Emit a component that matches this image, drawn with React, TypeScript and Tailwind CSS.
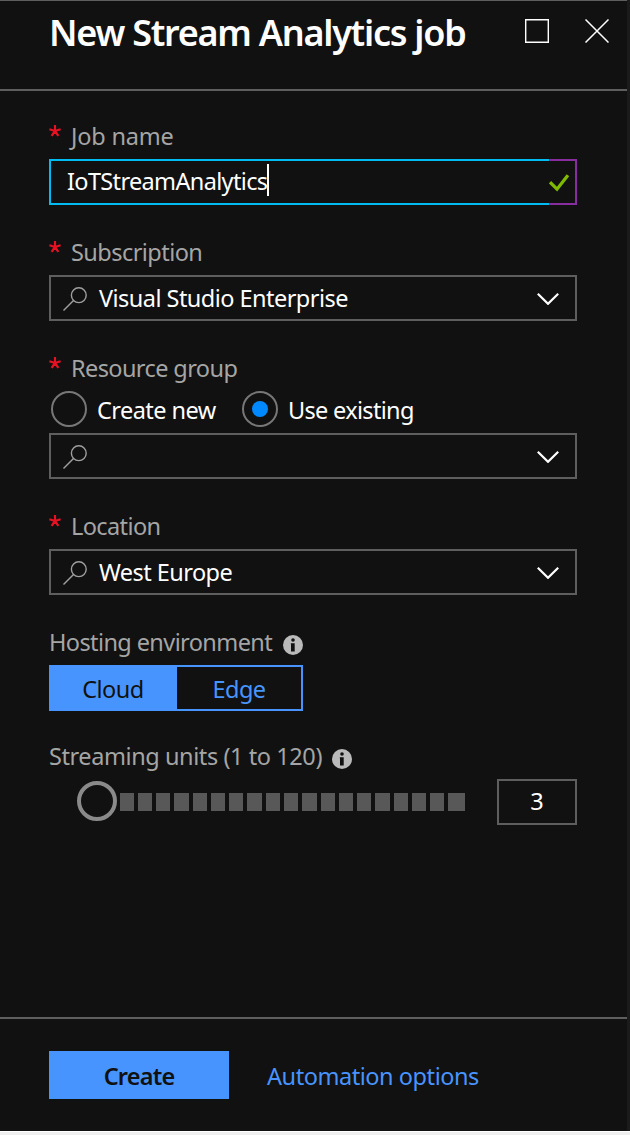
import type { ReactNode } from "react";

function Label({ children, required = false, tracking }: { children: ReactNode; required?: boolean; tracking: string }) {
  return (
    <div className="flex h-8 items-start text-[#a5a5a5]">
      {required && (
        <svg className="mt-[5px] mr-2.5 h-3 w-3 shrink-0" viewBox="0 0 12 12" fill="none" stroke="#e81123" strokeWidth="2.2">
          <path d="M6 0v6M6 6L.4 4.2M6 6l5.6-1.8M6 6l-3.4 4.8M6 6l3.4 4.8" />
        </svg>
      )}
      <span className={tracking}>{children}</span>
    </div>
  );
}

function SearchIcon() {
  return (
    <svg className="mt-0.5 h-6 w-6 shrink-0" viewBox="0 0 24 24" fill="none" stroke="#a0a0a0" strokeWidth="1.4">
      <circle cx="15.8" cy="8.2" r="7.4" />
      <path d="M10.5 13.5L.5 23.5" />
    </svg>
  );
}

function Chevron() {
  return (
    <svg className="mt-0.5 h-3 w-[22px] shrink-0" viewBox="0 0 22 12" fill="none" stroke="#fff" strokeWidth="2.2">
      <path d="M.8.8L11 10.8 21.2.8" />
    </svg>
  );
}

function InfoIcon({ className }: { className: string }) {
  return (
    <svg className={className} viewBox="0 0 20 20">
      <circle cx="10" cy="10" r="10" fill="#bababa" />
      <circle cx="10" cy="5" r="1.8" fill="#111" />
      <path d="M7.8 8.2h3.9v8.2H8V9.3h-.2z" fill="#111" />
    </svg>
  );
}

function Select({ children, tracking = "" }: { children?: ReactNode; tracking?: string }) {
  return (
    <div className="flex h-[46px] items-center border-2 border-[#5e5e5e] pr-4 pl-3 text-white">
      <SearchIcon />
      <span className={`ml-3 flex-1 ${tracking}`}>{children}</span>
      <Chevron />
    </div>
  );
}

function Radio({ children, checked = false, tracking }: { children: ReactNode; checked?: boolean; tracking: string }) {
  return (
    <div className="flex items-center text-white">
      <span className="flex size-9 items-center justify-center rounded-full border-2 border-[#777]">
        {checked && <span className="size-4 rounded-full bg-[#0089ff]" />}
      </span>
      <span className={`mt-0.5 ml-2.5 ${tracking}`}>{children}</span>
    </div>
  );
}

const segments = Array.from({ length: 19 }, (_, i) => i);

export default function App() {
  return (
    <div className="h-[1135px] w-[630px] overflow-hidden bg-[#efefef] font-['Noto_Sans','Open_Sans',sans-serif] text-[23.5px] leading-8 whitespace-nowrap">
      <div className="flex h-[1132px] flex-col border-b border-white bg-[#1b1b1b] pr-[3px]">
        <div className="flex h-full flex-col border-t border-[#5e5e5e] bg-[#111]">
          <header className="flex h-[90px] shrink-0 items-start border-b-2 border-[#5e5e5e] pr-[18px] pl-[49px] text-white">
            <h1 className="mt-2 flex-1 text-[36px] leading-[48px] font-semibold tracking-[-1.25px]">New Stream Analytics job</h1>
            <svg className="mt-[18px] mr-9 size-6" viewBox="0 0 24 24" fill="none" stroke="#fff" strokeWidth="1.4">
              <path d="M.7.7h22.6v22.6H.7z" />
            </svg>
            <svg className="mt-[18px] size-6" viewBox="0 0 24 24" fill="none" stroke="#fff" strokeWidth="1.5">
              <path d="M.5.5l23 23M23.5.5l-23 23" />
            </svg>
          </header>

          <main className="flex flex-1 flex-col pt-[29px] pr-[50px] pl-[49px]">
            <Label required tracking="tracking-[-0.2px]">Job name</Label>
            <div className="mt-[7px] flex h-[46px]">
              <div className="flex w-[500px] items-center border-2 border-r-0 border-[#00bcf2] pb-0.5 pl-4 text-white">
                <span className="tracking-[-0.65px]">IoTStreamAnalytics</span>
                <span className="mb-0.5 h-8 w-0.5 bg-white" />
              </div>
              <div className="flex flex-1 items-center border-2 border-l-0 border-[#882d9f]">
                <svg className="mt-0.5 h-[18px] w-5" viewBox="0 0 20 18" fill="none" stroke="#7fba00" strokeWidth="3.2">
                  <path d="M1 8.2l7 7L18.9 1.2" />
                </svg>
              </div>
            </div>

            <div className="mt-[31px]"><Label required tracking="tracking-[-0.55px]">Subscription</Label></div>
            <div className="mt-[7px]"><Select tracking="tracking-[-0.54px]">Visual Studio Enterprise</Select></div>

            <div className="mt-[31px]"><Label required tracking="tracking-[-0.6px]">Resource group</Label></div>
            <div className="mt-[7px] flex gap-[27px] pl-0.5">
              <Radio tracking="w-[118px] tracking-[-0.55px]">Create new</Radio>
              <Radio checked tracking="tracking-[-0.68px]">Use existing</Radio>
            </div>
            <div className="mt-1.5"><Select /></div>

            <div className="mt-[31px]"><Label required tracking="tracking-[-0.6px]">Location</Label></div>
            <div className="mt-[7px]"><Select tracking="tracking-[-0.55px]">West Europe</Select></div>

            <div className="mt-[31px] flex">
              <div className="w-[234px]"><Label tracking="tracking-[-0.6px]">Hosting environment</Label></div>
              <InfoIcon className="mt-[9px] size-5" />
            </div>
            <div className="mt-[7px] flex h-[46px] w-[254px] border-2 border-[#4894fe]">
              <div className="flex w-[126px] items-center justify-center bg-[#4894fe] pt-0.5 pr-0.5 text-[#111]"><span className="tracking-[-0.5px]">Cloud</span></div>
              <div className="flex flex-1 items-center justify-center pt-0.5 text-[#4894fe]"><span className="tracking-[-0.5px]">Edge</span></div>
            </div>

            <div className="mt-[29px] flex">
              <div className="w-[283px]"><Label tracking="tracking-[-0.42px]">Streaming units (1 to 120)</Label></div>
              <InfoIcon className="mt-[9px] size-5" />
            </div>
            <div className="mt-[7px] flex h-[46px] items-center">
              <div className="mb-0.5 ml-7 size-10 shrink-0 rounded-full border-4 border-[#8a8a8a]" />
              <div className="ml-[2.6px] flex">
                {segments.map((i) => (
                  <div key={i} className="h-[18px] w-[18.28px] pr-1 last:pr-[2px]">
                    <div className="h-full bg-[#585858]" />
                  </div>
                ))}
              </div>
              <div className="ml-auto flex h-[46px] w-20 items-center justify-center border-2 border-[#5e5e5e] pb-0.5 text-white">3</div>
            </div>
          </main>

          <footer className="flex h-[114px] shrink-0 items-start border-t-2 border-[#5e5e5e] pt-8 pl-[49px]">
            <div className="flex h-12 w-[180px] items-center justify-center bg-[#4894fe] pt-0.5 font-semibold text-[#111]"><span className="tracking-[-0.8px]">Create</span></div>
            <div className="ml-[38px] flex h-12 items-center pt-0.5 text-[#4894fe]"><span className="tracking-[-0.45px]">Automation options</span></div>
          </footer>
        </div>
      </div>
    </div>
  );
}
